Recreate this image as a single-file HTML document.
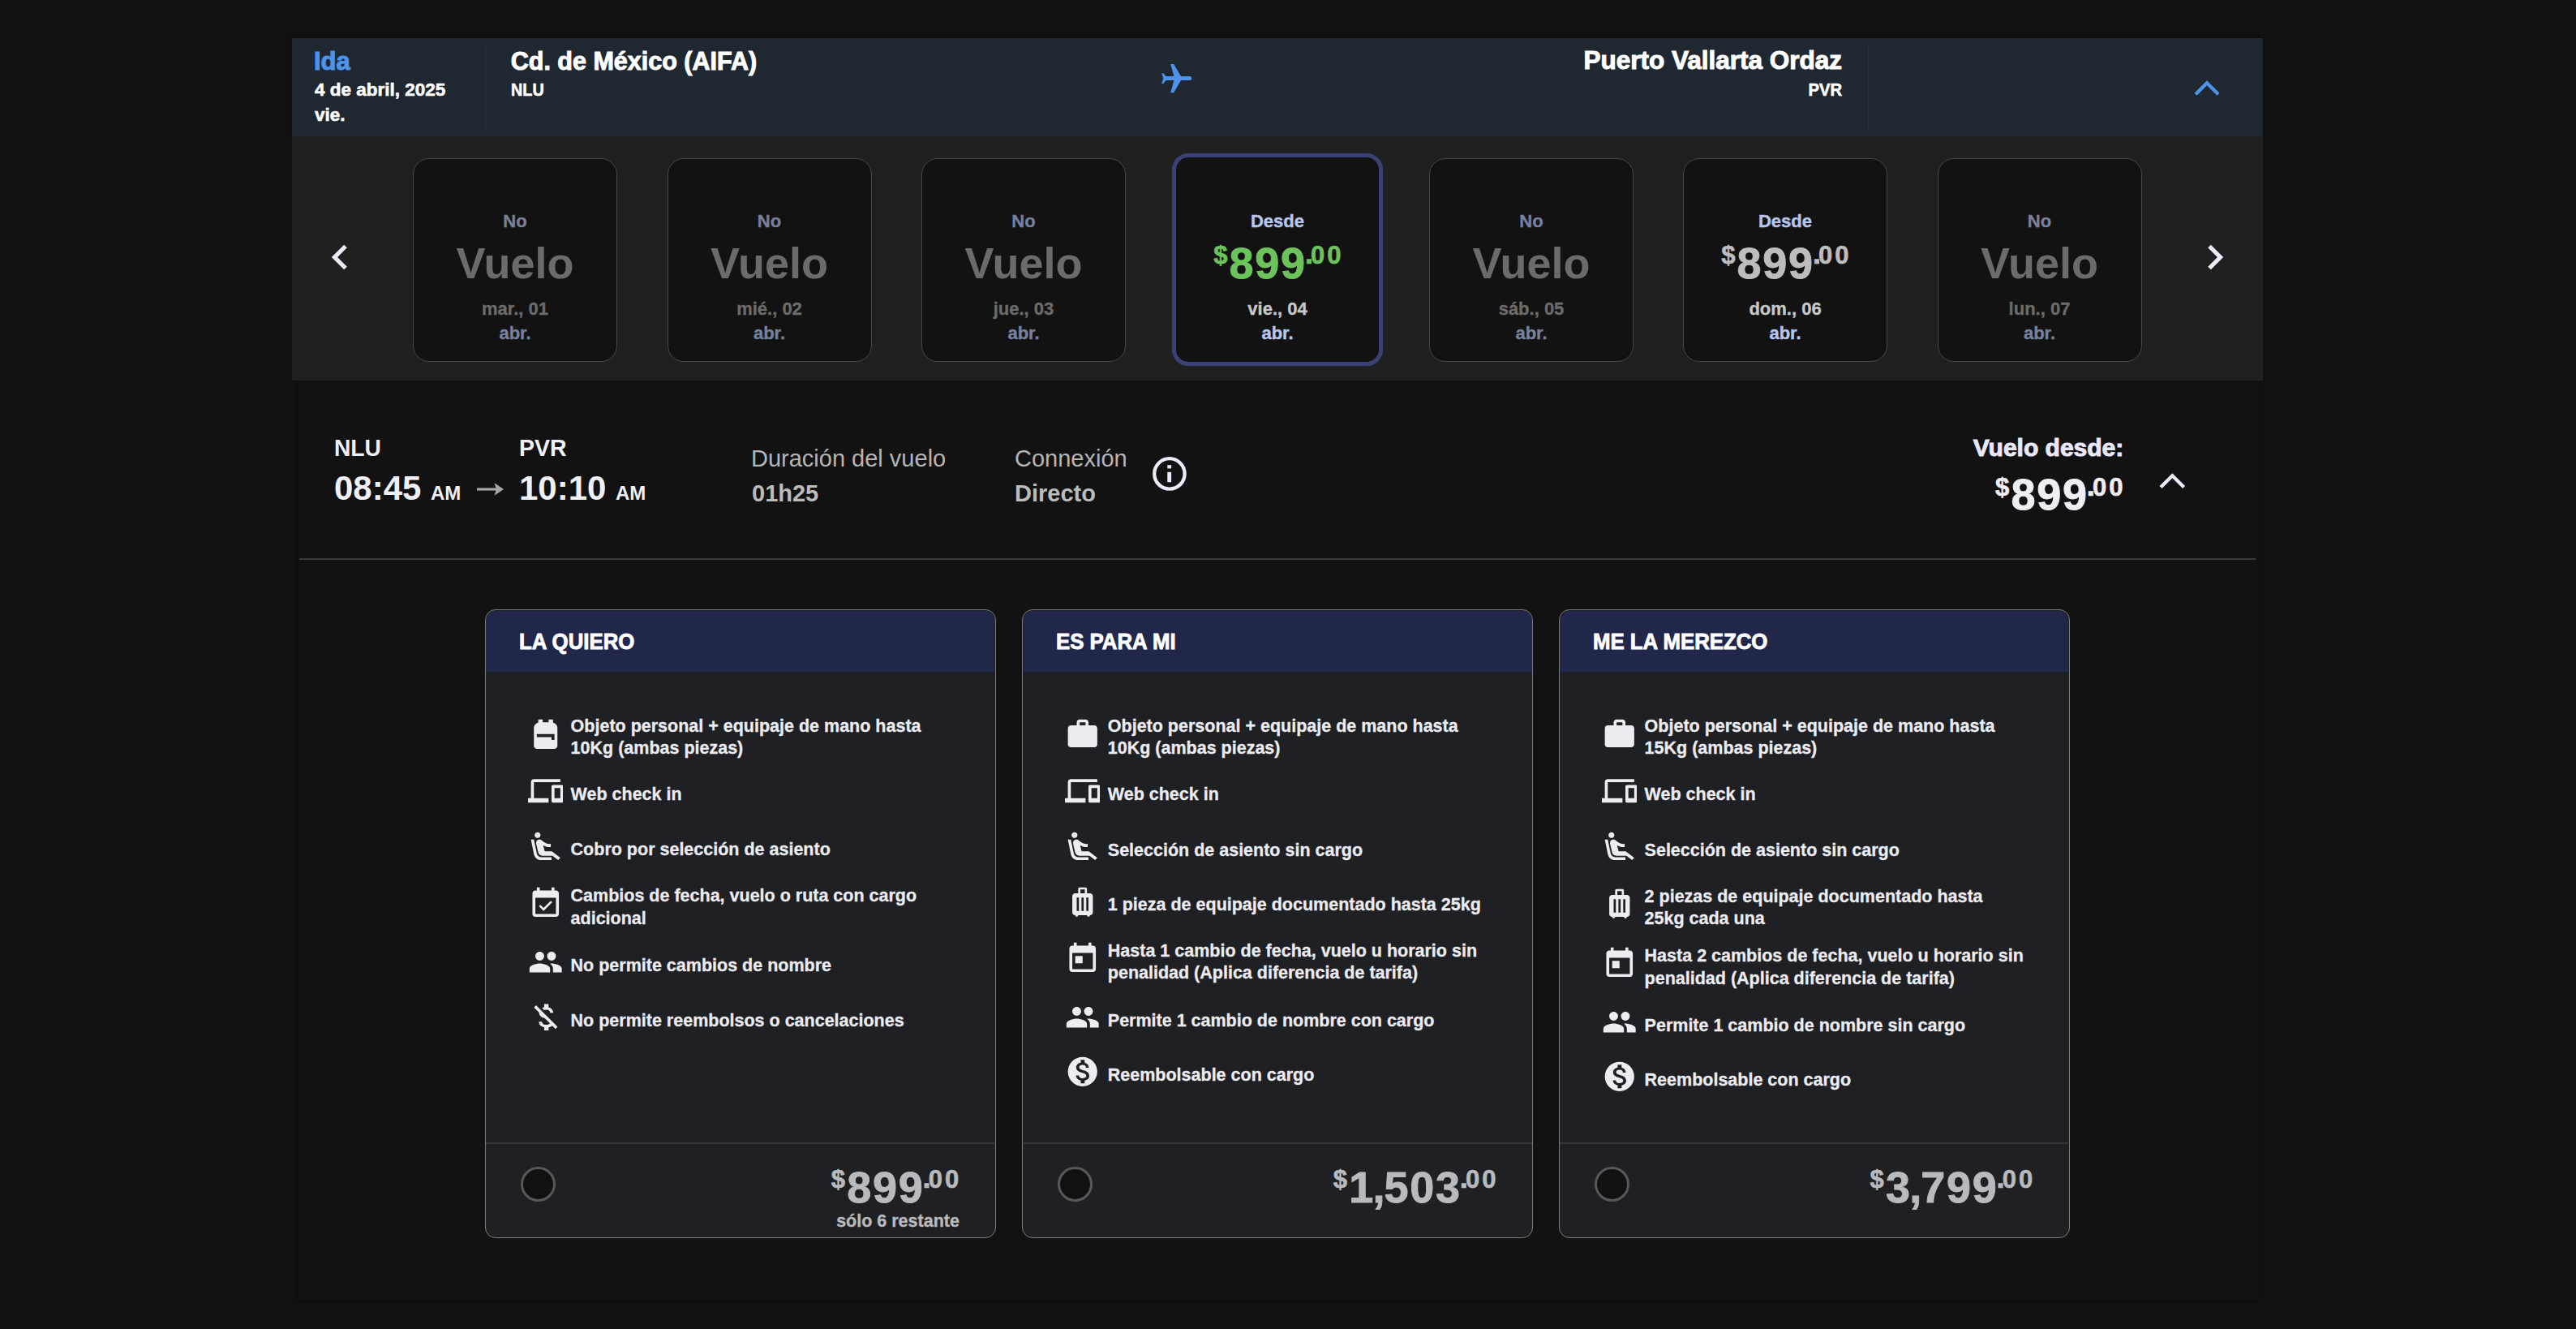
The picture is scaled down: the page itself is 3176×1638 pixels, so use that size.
<!DOCTYPE html><html><head><meta charset="utf-8"><style>
html,body{margin:0;padding:0;background:#111111;width:3176px;height:1638px;overflow:hidden;font-family:"Liberation Sans",sans-serif;}
.t{position:absolute;line-height:1;white-space:nowrap;}
.b{position:absolute;box-sizing:border-box;}
</style></head><body>
<div class="b" style="left:368.00px;top:41.00px;width:2415.00px;height:1560.50px;background:#121212;border-radius:4px;box-shadow:0 3px 4px rgba(0,0,0,0.3);"></div>
<div class="b" style="left:360.00px;top:47.00px;width:2430.00px;height:121.00px;background:#1f2830;box-shadow:0 -3px 5px rgba(0,0,0,0.25);"></div>
<div class="t" style="left:386.99px;top:59.76px;font-size:31px;color:#4d93ea;font-weight:700;-webkit-text-stroke-width:1px;">Ida</div>
<div class="t" style="left:388.00px;top:99.75px;font-size:22.5px;color:#ffffff;font-weight:700;-webkit-text-stroke-width:0.6px;">4 de abril, 2025</div>
<div class="t" style="left:388.00px;top:130.95px;font-size:22.5px;color:#ffffff;font-weight:700;-webkit-text-stroke-width:0.6px;">vie.</div>
<div class="b" style="left:597.50px;top:56.00px;width:1.50px;height:103.00px;background:#2b343d;"></div>
<div class="t" style="left:629.78px;top:60.18px;font-size:30.5px;color:#ffffff;font-weight:700;-webkit-text-stroke-width:1px;">Cd. de México (AIFA)</div>
<div class="t" style="left:629.57px;top:100.18px;font-size:22px;color:#ffffff;font-weight:700;transform:scaleX(0.9);transform-origin:left;-webkit-text-stroke-width:0.6px;">NLU</div>
<svg class="b" style="left:1420px;top:70px;width:60px;height:55px" viewBox="1420 70 60 55"><path fill="#4d93ea" d="M1456 94.1 L1466.4 94.1 Q1469.3 94.1 1469.3 96.6 Q1469.3 99.1 1466.4 99.1 L1456 99.1 L1447.2 114.2 L1443.2 114.2 L1447.4 99.1 L1437.6 99.1 L1434.2 103 L1432.2 103 L1434.3 96.6 L1432.2 90.2 L1434.2 90.2 L1437.6 94.1 L1447.4 94.1 L1443.2 79 L1447.2 79 Z"/></svg>
<div class="t" style="right:905.00px;text-align:right;top:59.34px;font-size:31.5px;color:#ffffff;font-weight:700;-webkit-text-stroke-width:1px;">Puerto Vallarta Ordaz</div>
<div class="t" style="right:905.00px;text-align:right;top:100.18px;font-size:22px;color:#ffffff;font-weight:700;transform:scaleX(0.92);transform-origin:right;-webkit-text-stroke-width:0.6px;">PVR</div>
<div class="b" style="left:2302.50px;top:56.00px;width:1.50px;height:103.00px;background:#2b343d;"></div>
<svg class="b" style="left:2700px;top:92px;width:42px;height:30px" viewBox="0 0 42 30"><path d="M7 24.3 L21 10.3 L35 24.3" fill="none" stroke="#4d93ea" stroke-width="4.4"/></svg>
<div class="b" style="left:360.00px;top:168.00px;width:2430.00px;height:300.60px;background:#202020;"></div>
<svg class="b" style="left:400px;top:296px;width:36px;height:42px" viewBox="0 0 36 42"><path d="M26 7.5 L12.5 21 L26 34.5" fill="none" stroke="#ececf8" stroke-width="5.2"/></svg>
<svg class="b" style="left:2714px;top:296px;width:36px;height:42px" viewBox="0 0 36 42"><path d="M10 7.5 L23.5 21 L10 34.5" fill="none" stroke="#ececf8" stroke-width="5.2"/></svg>
<div class="b" style="left:509.00px;top:195.00px;width:252.00px;height:251.00px;background:#121212;border:1.5px solid #474747;border-radius:20px;"></div>
<div class="t" style="left:-165.00px;width:1600px;text-align:center;top:262.38px;font-size:22px;color:#77819d;font-weight:700;-webkit-text-stroke-width:0.35px;">No</div>
<div class="t" style="left:-165.00px;width:1600px;text-align:center;top:297.29px;font-size:54px;color:#6b6b6b;font-weight:700;">Vuelo</div>
<div class="t" style="left:-165.00px;width:1600px;text-align:center;top:369.88px;font-size:22px;color:#6b6b6b;font-weight:700;-webkit-text-stroke-width:0.35px;">mar., 01</div>
<div class="t" style="left:-165.00px;width:1600px;text-align:center;top:400.38px;font-size:22px;color:#77819d;font-weight:700;-webkit-text-stroke-width:0.35px;">abr.</div>
<div class="b" style="left:822.50px;top:195.00px;width:252.00px;height:251.00px;background:#121212;border:1.5px solid #474747;border-radius:20px;"></div>
<div class="t" style="left:148.50px;width:1600px;text-align:center;top:262.38px;font-size:22px;color:#77819d;font-weight:700;-webkit-text-stroke-width:0.35px;">No</div>
<div class="t" style="left:148.50px;width:1600px;text-align:center;top:297.29px;font-size:54px;color:#6b6b6b;font-weight:700;">Vuelo</div>
<div class="t" style="left:148.50px;width:1600px;text-align:center;top:369.88px;font-size:22px;color:#6b6b6b;font-weight:700;-webkit-text-stroke-width:0.35px;">mié., 02</div>
<div class="t" style="left:148.50px;width:1600px;text-align:center;top:400.38px;font-size:22px;color:#77819d;font-weight:700;-webkit-text-stroke-width:0.35px;">abr.</div>
<div class="b" style="left:1136.00px;top:195.00px;width:252.00px;height:251.00px;background:#121212;border:1.5px solid #474747;border-radius:20px;"></div>
<div class="t" style="left:462.00px;width:1600px;text-align:center;top:262.38px;font-size:22px;color:#77819d;font-weight:700;-webkit-text-stroke-width:0.35px;">No</div>
<div class="t" style="left:462.00px;width:1600px;text-align:center;top:297.29px;font-size:54px;color:#6b6b6b;font-weight:700;">Vuelo</div>
<div class="t" style="left:462.00px;width:1600px;text-align:center;top:369.88px;font-size:22px;color:#6b6b6b;font-weight:700;-webkit-text-stroke-width:0.35px;">jue., 03</div>
<div class="t" style="left:462.00px;width:1600px;text-align:center;top:400.38px;font-size:22px;color:#77819d;font-weight:700;-webkit-text-stroke-width:0.35px;">abr.</div>
<div class="b" style="left:1444.60px;top:189.40px;width:260.10px;height:262.00px;background:#121212;border:5.5px solid #3b4174;border-radius:20px;"></div>
<div class="t" style="left:775.00px;width:1600px;text-align:center;top:262.38px;font-size:22px;color:#b6c6ec;font-weight:700;-webkit-text-stroke-width:0.4px;">Desde</div>
<div class="t" style="left:1496.13px;top:297.09px;font-size:54px;color:#6cc35b;font-weight:700;-webkit-text-stroke-width:0.9px;"><span style="font-size:31px;vertical-align:18.30px;margin-right:2.20px;-webkit-text-stroke-width:0.6px;">$</span><span style="letter-spacing:1.7px;">899</span><span style="font-size:37.82px;line-height:0;vertical-align:18.30px;margin-left:-2.15px;margin-right:-3.10px;-webkit-text-stroke-width:0.6px;">.</span><span style="font-size:31px;vertical-align:18.30px;letter-spacing:3.0px;-webkit-text-stroke-width:0.6px;">00</span></div>
<div class="t" style="left:775.00px;width:1600px;text-align:center;top:369.68px;font-size:22px;color:#c8c8c8;font-weight:700;-webkit-text-stroke-width:0.35px;">vie., 04</div>
<div class="t" style="left:775.00px;width:1600px;text-align:center;top:400.18px;font-size:22px;color:#b6c6ec;font-weight:700;-webkit-text-stroke-width:0.4px;">abr.</div>
<div class="b" style="left:1762.00px;top:195.00px;width:252.00px;height:251.00px;background:#121212;border:1.5px solid #474747;border-radius:20px;"></div>
<div class="t" style="left:1088.00px;width:1600px;text-align:center;top:262.38px;font-size:22px;color:#77819d;font-weight:700;-webkit-text-stroke-width:0.35px;">No</div>
<div class="t" style="left:1088.00px;width:1600px;text-align:center;top:297.29px;font-size:54px;color:#6b6b6b;font-weight:700;">Vuelo</div>
<div class="t" style="left:1088.00px;width:1600px;text-align:center;top:369.88px;font-size:22px;color:#6b6b6b;font-weight:700;-webkit-text-stroke-width:0.35px;">sáb., 05</div>
<div class="t" style="left:1088.00px;width:1600px;text-align:center;top:400.38px;font-size:22px;color:#77819d;font-weight:700;-webkit-text-stroke-width:0.35px;">abr.</div>
<div class="b" style="left:2075.00px;top:195.00px;width:252.00px;height:251.00px;background:#121212;border:1.5px solid #474747;border-radius:20px;"></div>
<div class="t" style="left:1401.00px;width:1600px;text-align:center;top:262.38px;font-size:22px;color:#b6c6ec;font-weight:700;-webkit-text-stroke-width:0.4px;">Desde</div>
<div class="t" style="left:2122.13px;top:297.09px;font-size:54px;color:#bdbdbd;font-weight:700;-webkit-text-stroke-width:0.9px;"><span style="font-size:31px;vertical-align:18.30px;margin-right:2.20px;-webkit-text-stroke-width:0.6px;">$</span><span style="letter-spacing:1.7px;">899</span><span style="font-size:37.82px;line-height:0;vertical-align:18.30px;margin-left:-2.15px;margin-right:-3.10px;-webkit-text-stroke-width:0.6px;">.</span><span style="font-size:31px;vertical-align:18.30px;letter-spacing:3.0px;-webkit-text-stroke-width:0.6px;">00</span></div>
<div class="t" style="left:1401.00px;width:1600px;text-align:center;top:369.68px;font-size:22px;color:#c8c8c8;font-weight:700;-webkit-text-stroke-width:0.35px;">dom., 06</div>
<div class="t" style="left:1401.00px;width:1600px;text-align:center;top:400.18px;font-size:22px;color:#b6c6ec;font-weight:700;-webkit-text-stroke-width:0.4px;">abr.</div>
<div class="b" style="left:2388.50px;top:195.00px;width:252.00px;height:251.00px;background:#121212;border:1.5px solid #474747;border-radius:20px;"></div>
<div class="t" style="left:1714.50px;width:1600px;text-align:center;top:262.38px;font-size:22px;color:#77819d;font-weight:700;-webkit-text-stroke-width:0.35px;">No</div>
<div class="t" style="left:1714.50px;width:1600px;text-align:center;top:297.29px;font-size:54px;color:#6b6b6b;font-weight:700;">Vuelo</div>
<div class="t" style="left:1714.50px;width:1600px;text-align:center;top:369.88px;font-size:22px;color:#6b6b6b;font-weight:700;-webkit-text-stroke-width:0.35px;">lun., 07</div>
<div class="t" style="left:1714.50px;width:1600px;text-align:center;top:400.38px;font-size:22px;color:#77819d;font-weight:700;-webkit-text-stroke-width:0.35px;">abr.</div>
<div class="t" style="left:412.00px;top:536.81px;font-size:30px;color:#f0f0f8;font-weight:700;transform:scaleX(0.94);transform-origin:left;">NLU</div>
<div class="t" style="left:412.00px;top:580.95px;font-size:42px;color:#f0f0f8;font-weight:700;">08:45</div>
<div class="t" style="left:531.00px;top:595.88px;font-size:24px;color:#f0f0f8;font-weight:700;">AM</div>
<svg class="b" style="left:586px;top:592px;width:38px;height:22px" viewBox="0 0 38 22"><path d="M2 11 H31" fill="none" stroke="#a8a8a8" stroke-width="3.2"/><path d="M23.5 3.2 L35 11 L23.5 18.8 L26 11 Z" fill="#a8a8a8"/></svg>
<div class="t" style="left:640.00px;top:536.81px;font-size:30px;color:#f0f0f8;font-weight:700;transform:scaleX(0.95);transform-origin:left;">PVR</div>
<div class="t" style="left:640.00px;top:580.95px;font-size:42px;color:#f0f0f8;font-weight:700;">10:10</div>
<div class="t" style="left:759.00px;top:595.88px;font-size:24px;color:#f0f0f8;font-weight:700;">AM</div>
<div class="t" style="left:926.00px;top:551.25px;font-size:29px;color:#b5b5b5;font-weight:400;">Duración del vuelo</div>
<div class="t" style="left:927.00px;top:594.05px;font-size:29px;color:#bcbcbc;font-weight:700;">01h25</div>
<div class="t" style="left:1251.00px;top:551.25px;font-size:29px;color:#b5b5b5;font-weight:400;">Connexión</div>
<div class="t" style="left:1251.00px;top:594.05px;font-size:29px;color:#bcbcbc;font-weight:700;">Directo</div>
<svg class="b" style="left:1419px;top:561px;width:45px;height:45px" viewBox="0 0 45 45"><circle cx="22.9" cy="22.9" r="18.7" fill="none" stroke="#ececf8" stroke-width="4.3"/><rect x="20.3" y="20.8" width="4.8" height="12.5" fill="#ececf8"/><rect x="20.3" y="12.2" width="4.8" height="4.2" fill="#ececf8"/></svg>
<div class="t" style="right:557.70px;text-align:right;top:536.61px;font-size:30px;color:#e8e8f8;font-weight:700;-webkit-text-stroke-width:1px;">Vuelo desde:</div>
<div class="t" style="left:2460.03px;top:581.79px;font-size:54px;color:#eeeef4;font-weight:700;-webkit-text-stroke-width:0.9px;"><span style="font-size:31px;vertical-align:16.80px;margin-right:2.20px;-webkit-text-stroke-width:0.6px;">$</span><span style="letter-spacing:1.7px;">899</span><span style="font-size:37.82px;line-height:0;vertical-align:16.80px;margin-left:-2.15px;margin-right:-3.10px;-webkit-text-stroke-width:0.6px;">.</span><span style="font-size:31px;vertical-align:16.80px;letter-spacing:3.0px;-webkit-text-stroke-width:0.6px;">00</span></div>
<svg class="b" style="left:2656px;top:576px;width:44px;height:32px" viewBox="0 0 44 32"><path d="M8 24.5 L22.3 10.2 L36.6 24.5" fill="none" stroke="#ececf8" stroke-width="4.3"/></svg>
<div class="b" style="left:369.00px;top:688.00px;width:2412.00px;height:2.00px;background:#3a3a3a;"></div>
<div class="b" style="left:598.20px;top:751.30px;width:629.40px;height:774.50px;background:#1f2023;border:1.2px solid #7c7c7e;border-radius:13px;overflow:hidden;"></div>
<div class="b" style="left:599.40px;top:752.50px;width:627.00px;height:75.80px;background:#21274a;border-radius:12px 12px 0 0;"></div>
<div class="t" style="left:640.05px;top:775.57px;font-size:28.5px;color:#ffffff;font-weight:700;transform:scaleX(0.905);transform-origin:left;-webkit-text-stroke-width:0.9px;">LA QUIERO</div>
<div class="t" style="left:703.60px;top:884.70px;font-size:21.5px;color:#ececf2;font-weight:700;-webkit-text-stroke-width:0.3px;">Objeto personal + equipaje de mano hasta</div>
<div class="t" style="left:703.60px;top:912.20px;font-size:21.5px;color:#ececf2;font-weight:700;-webkit-text-stroke-width:0.3px;">10Kg (ambas piezas)</div>
<svg class="b" style="left:650.55px;top:882.55px;width:43.50px;height:43.50px;" viewBox="0 0 24 24"><path fill="#ececf2" d="M20 8v12c0 1.1-.9 2-2 2H6c-1.1 0-2-.9-2-2V8c0-1.86 1.28-3.41 3-3.86V2h3v2h4V2h3v2.14c1.72.45 3 2 3 3.86zM6 12v2h10v2h2v-4H6z"/></svg>
<div class="t" style="left:703.60px;top:969.30px;font-size:21.5px;color:#ececf2;font-weight:700;-webkit-text-stroke-width:0.3px;">Web check in</div>
<svg class="b" style="left:650.55px;top:953.40px;width:43.50px;height:43.50px;" viewBox="0 0 24 24"><path fill="#ececf2" d="M4 6h18V4H4c-1.1 0-2 .9-2 2v11H0v3h14v-3H4V6zm19 2h-6c-.55 0-1 .45-1 1v10c0 .55.45 1 1 1h6c.55 0 1-.45 1-1V9c0-.55-.45-1-1-1zm-1 9h-4v-7h4v7z"/></svg>
<div class="t" style="left:703.60px;top:1037.40px;font-size:21.5px;color:#ececf2;font-weight:700;-webkit-text-stroke-width:0.3px;">Cobro por selección de asiento</div>
<svg class="b" style="left:650.55px;top:1021.50px;width:43.50px;height:43.50px;" viewBox="0 0 24 24"><path fill="#ececf2" d="M5.35 5.64c-.9-.64-1.12-1.88-.49-2.79.63-.9 1.880-1.12 2.79-.49.9.64 1.12 1.88.49 2.79-.64.9-1.88 1.12-2.790.49zM16 19H8.930c-1.48 0-2.74-1.08-2.96-2.54L4 7H2l1.99 9.76C4.37 19.2 6.47 21 8.94 21H16v-2zm.23-4h-4.88l-1.03-4.1c1.58.89 3.28 1.54 5.15 1.22V9.99c-1.63.31-3.440-.27-4.69-1.25L9.14 7.47c-.23-.18-.49-.3-.76-.38-.32-.09-.66-.12-.99-.06h-.02c-1.23.22-2.05 1.39-1.84 2.61l1.35 5.92C7.16 16.98 8.39 18 9.83 18h6.85l3.82 3 1.5-1.5-5.77-4.5z"/></svg>
<div class="t" style="left:703.60px;top:1094.30px;font-size:21.5px;color:#ececf2;font-weight:700;-webkit-text-stroke-width:0.3px;">Cambios de fecha, vuelo o ruta con cargo</div>
<div class="t" style="left:703.60px;top:1121.80px;font-size:21.5px;color:#ececf2;font-weight:700;-webkit-text-stroke-width:0.3px;">adicional</div>
<svg class="b" style="left:650.55px;top:1092.15px;width:43.50px;height:43.50px;" viewBox="0 0 24 24"><path fill="#ececf2" d="M16.53 11.06L15.47 10l-4.88 4.88-2.12-2.12-1.06 1.06L10.59 17l5.94-5.94zM19 3h-1V1h-2v2H8V1H6v2H5c-1.11 0-1.99.9-1.99 2L3 19c0 1.1.89 2 2 2h14c1.1 0 2-.9 2-2V5c0-1.1-.9-2-2-2zm0 16H5V8h14v11z"/></svg>
<div class="t" style="left:703.60px;top:1180.10px;font-size:21.5px;color:#ececf2;font-weight:700;-webkit-text-stroke-width:0.3px;">No permite cambios de nombre</div>
<svg class="b" style="left:650.55px;top:1164.20px;width:43.50px;height:43.50px;" viewBox="0 0 24 24"><path fill="#ececf2" d="M16 11c1.66 0 2.99-1.34 2.99-3S17.66 5 16 5c-1.66 0-3 1.34-3 3s1.34 3 3 3zm-8 0c1.66 0 2.99-1.34 2.99-3S9.66 5 8 5C6.34 5 5 6.34 5 8s1.34 3 3 3zm0 2c-2.33 0-7 1.17-7 3.5V19h14v-2.5c0-2.33-4.67-3.5-7-3.5zm8 0c-.29 0-.62.02-.97.05 1.16.84 1.97 1.97 1.97 3.45V19h6v-2.5c0-2.33-4.67-3.5-7-3.5z"/></svg>
<div class="t" style="left:703.60px;top:1247.70px;font-size:21.5px;color:#ececf2;font-weight:700;-webkit-text-stroke-width:0.3px;">No permite reembolsos o cancelaciones</div>
<svg class="b" style="left:650.55px;top:1231.80px;width:43.50px;height:43.50px;" viewBox="0 0 24 24"><path fill="#ececf2" d="M12.5 6.9c1.78 0 2.44.85 2.5 2.1h2.21c-.07-1.72-1.12-3.3-3.21-3.81V3h-3v2.16c-.53.12-1.030.3-1.48.54l1.47 1.47c.41-.17.91-.27 1.51-.27zM5.47 3.92L4.06 5.33 7.5 8.77c0 2.08 1.56 3.21 3.91 3.910l3.51 3.51c-.34.48-1.05.91-2.42.91-2.06 0-2.87-.92-2.98-2.1h-2.2c.12 2.19 1.76 3.42 3.68 3.83V21h3v-2.15c.96-.18 1.82-.55 2.45-1.12l2.22 2.22 1.41-1.41L5.47 3.92z"/></svg>
<div class="b" style="left:599.40px;top:1408.40px;width:627.00px;height:2.00px;background:#35363a;"></div>
<div class="b" style="left:642.20px;top:1437.5px;width:43px;height:43px;border-radius:50%;border:3px solid #58585c;background:#111111;"></div>
<div class="t" style="right:1990.74px;top:1435.89px;font-size:54px;color:#b9babd;font-weight:700;-webkit-text-stroke-width:0.9px;"><span style="font-size:31px;vertical-align:18.00px;margin-right:2.20px;-webkit-text-stroke-width:0.6px;">$</span><span style="letter-spacing:1.7px;">899</span><span style="font-size:37.82px;line-height:0;vertical-align:18.00px;margin-left:-2.15px;margin-right:-3.10px;-webkit-text-stroke-width:0.6px;">.</span><span style="font-size:31px;vertical-align:18.00px;letter-spacing:3.0px;-webkit-text-stroke-width:0.6px;">00</span></div>
<div class="t" style="right:1993.10px;text-align:right;top:1494.60px;font-size:21.5px;color:#b9babd;font-weight:700;-webkit-text-stroke-width:0.35px;">sólo 6 restante</div>
<div class="b" style="left:1260.40px;top:751.30px;width:629.40px;height:774.50px;background:#1f2023;border:1.2px solid #7c7c7e;border-radius:13px;overflow:hidden;"></div>
<div class="b" style="left:1261.60px;top:752.50px;width:627.00px;height:75.80px;background:#21274a;border-radius:12px 12px 0 0;"></div>
<div class="t" style="left:1302.25px;top:775.57px;font-size:28.5px;color:#ffffff;font-weight:700;transform:scaleX(0.905);transform-origin:left;-webkit-text-stroke-width:0.9px;">ES PARA MI</div>
<div class="t" style="left:1365.80px;top:884.70px;font-size:21.5px;color:#ececf2;font-weight:700;-webkit-text-stroke-width:0.3px;">Objeto personal + equipaje de mano hasta</div>
<div class="t" style="left:1365.80px;top:912.20px;font-size:21.5px;color:#ececf2;font-weight:700;-webkit-text-stroke-width:0.3px;">10Kg (ambas piezas)</div>
<svg class="b" style="left:1312.75px;top:882.55px;width:43.50px;height:43.50px;" viewBox="0 0 24 24"><path fill="#ececf2" d="M20 6h-4V4c0-1.11-.89-2-2-2h-4c-1.11 0-2 .89-2 2v2H4c-1.11 0-1.99.89-1.99 2L2 19c0 1.11.89 2 2 2h16c1.11 0 2-.89 2-2V8c0-1.11-.89-2-2-2zm-6 0h-4V4h4v2z"/></svg>
<div class="t" style="left:1365.80px;top:969.30px;font-size:21.5px;color:#ececf2;font-weight:700;-webkit-text-stroke-width:0.3px;">Web check in</div>
<svg class="b" style="left:1312.75px;top:953.40px;width:43.50px;height:43.50px;" viewBox="0 0 24 24"><path fill="#ececf2" d="M4 6h18V4H4c-1.1 0-2 .9-2 2v11H0v3h14v-3H4V6zm19 2h-6c-.55 0-1 .45-1 1v10c0 .55.45 1 1 1h6c.55 0 1-.45 1-1V9c0-.55-.45-1-1-1zm-1 9h-4v-7h4v7z"/></svg>
<div class="t" style="left:1365.80px;top:1037.50px;font-size:21.5px;color:#ececf2;font-weight:700;-webkit-text-stroke-width:0.3px;">Selección de asiento sin cargo</div>
<svg class="b" style="left:1312.75px;top:1021.60px;width:43.50px;height:43.50px;" viewBox="0 0 24 24"><path fill="#ececf2" d="M5.35 5.64c-.9-.64-1.12-1.88-.49-2.79.63-.9 1.880-1.12 2.79-.49.9.64 1.12 1.88.49 2.79-.64.9-1.88 1.12-2.790.49zM16 19H8.930c-1.48 0-2.74-1.08-2.96-2.54L4 7H2l1.99 9.76C4.37 19.2 6.47 21 8.94 21H16v-2zm.23-4h-4.88l-1.03-4.1c1.58.89 3.28 1.54 5.15 1.22V9.99c-1.63.31-3.440-.27-4.69-1.25L9.14 7.47c-.23-.18-.49-.3-.76-.38-.32-.09-.66-.12-.99-.06h-.02c-1.23.22-2.05 1.39-1.84 2.61l1.35 5.92C7.16 16.98 8.39 18 9.83 18h6.85l3.82 3 1.5-1.5-5.77-4.5z"/></svg>
<div class="t" style="left:1365.80px;top:1105.40px;font-size:21.5px;color:#ececf2;font-weight:700;-webkit-text-stroke-width:0.3px;">1 pieza de equipaje documentado hasta 25kg</div>
<svg class="b" style="left:1312.75px;top:1089.50px;width:43.50px;height:43.50px;" viewBox="0 0 24 24"><path fill="#ececf2" d="M17 6h-2V3c0-.55-.45-1-1-1h-4c-.55 0-1 .45-1 1v3H7c-1.1 0-2 .9-2 2v11c0 1.1.9 2 2 2 0 .55.45 1 1 1s1-.45 1-1h6c0 .55.45 1 1 1s1-.45 1-1c1.1 0 2-.9 2-2V8c0-1.1-.9-2-2-2zM9.5 18H8V9h1.5v9zm3.25 0h-1.5V9h1.5v9zm.75-12h-3V3.5h3V6zM16 18h-1.5V9H16v9z"/></svg>
<div class="t" style="left:1365.80px;top:1161.80px;font-size:21.5px;color:#ececf2;font-weight:700;-webkit-text-stroke-width:0.3px;">Hasta 1 cambio de fecha, vuelo u horario sin</div>
<div class="t" style="left:1365.80px;top:1189.30px;font-size:21.5px;color:#ececf2;font-weight:700;-webkit-text-stroke-width:0.3px;">penalidad (Aplica diferencia de tarifa)</div>
<svg class="b" style="left:1312.75px;top:1159.65px;width:43.50px;height:43.50px;" viewBox="0 0 24 24"><path fill="#ececf2" d="M19 3h-1V1h-2v2H8V1H6v2H5c-1.11 0-1.99.9-1.99 2L3 19c0 1.1.89 2 2 2h14c1.1 0 2-.9 2-2V5c0-1.1-.9-2-2-2zm0 16H5V8h14v11zM7 10h5v5H7z"/></svg>
<div class="t" style="left:1365.80px;top:1247.70px;font-size:21.5px;color:#ececf2;font-weight:700;-webkit-text-stroke-width:0.3px;">Permite 1 cambio de nombre con cargo</div>
<svg class="b" style="left:1312.75px;top:1231.80px;width:43.50px;height:43.50px;" viewBox="0 0 24 24"><path fill="#ececf2" d="M16 11c1.66 0 2.99-1.34 2.99-3S17.66 5 16 5c-1.66 0-3 1.34-3 3s1.34 3 3 3zm-8 0c1.66 0 2.99-1.34 2.99-3S9.66 5 8 5C6.34 5 5 6.34 5 8s1.34 3 3 3zm0 2c-2.33 0-7 1.17-7 3.5V19h14v-2.5c0-2.33-4.67-3.5-7-3.5zm8 0c-.29 0-.62.02-.97.05 1.16.84 1.97 1.97 1.97 3.45V19h6v-2.5c0-2.33-4.67-3.5-7-3.5z"/></svg>
<div class="t" style="left:1365.80px;top:1315.30px;font-size:21.5px;color:#ececf2;font-weight:700;-webkit-text-stroke-width:0.3px;">Reembolsable con cargo</div>
<svg class="b" style="left:1312.75px;top:1299.40px;width:43.50px;height:43.50px;" viewBox="0 0 24 24"><path fill="#ececf2" d="M12 2C6.48 2 2 6.48 2 12s4.48 10 10 10 10-4.48 10-10S17.52 2 12 2zm1.41 16.09V20h-2.67v-1.93c-1.71-.36-3.16-1.46-3.27-3.4h1.96c.1 1.05.82 1.87 2.65 1.87 1.96 0 2.4-.98 2.4-1.59 0-.83-.44-1.61-2.67-2.14-2.48-.6-4.18-1.62-4.18-3.67 0-1.72 1.39-2.84 3.110-3.21V4h2.67v1.95c1.86.45 2.79 1.86 2.85 3.39H14.3c-.05-1.11-.64-1.87-2.22-1.87-1.5 0-2.4.68-2.4 1.64 0 .84.65 1.39 2.67 1.91s4.18 1.39 4.18 3.91c-.01 1.83-1.38 2.83-3.12 3.16z"/></svg>
<div class="b" style="left:1261.60px;top:1408.40px;width:627.00px;height:2.00px;background:#35363a;"></div>
<div class="b" style="left:1304.40px;top:1437.5px;width:43px;height:43px;border-radius:50%;border:3px solid #58585c;background:#111111;"></div>
<div class="t" style="right:1328.54px;top:1435.89px;font-size:54px;color:#b9babd;font-weight:700;-webkit-text-stroke-width:0.9px;"><span style="font-size:31px;vertical-align:18.00px;margin-right:2.20px;-webkit-text-stroke-width:0.6px;">$</span><span style="letter-spacing:1.7px;">1<span style="margin:0 -2.6px;">,</span>503</span><span style="font-size:37.82px;line-height:0;vertical-align:18.00px;margin-left:-2.15px;margin-right:-3.10px;-webkit-text-stroke-width:0.6px;">.</span><span style="font-size:31px;vertical-align:18.00px;letter-spacing:3.0px;-webkit-text-stroke-width:0.6px;">00</span></div>
<div class="b" style="left:1922.20px;top:751.30px;width:629.40px;height:774.50px;background:#1f2023;border:1.2px solid #7c7c7e;border-radius:13px;overflow:hidden;"></div>
<div class="b" style="left:1923.40px;top:752.50px;width:627.00px;height:75.80px;background:#21274a;border-radius:12px 12px 0 0;"></div>
<div class="t" style="left:1964.05px;top:775.57px;font-size:28.5px;color:#ffffff;font-weight:700;transform:scaleX(0.905);transform-origin:left;-webkit-text-stroke-width:0.9px;">ME LA MEREZCO</div>
<div class="t" style="left:2027.60px;top:884.70px;font-size:21.5px;color:#ececf2;font-weight:700;-webkit-text-stroke-width:0.3px;">Objeto personal + equipaje de mano hasta</div>
<div class="t" style="left:2027.60px;top:912.20px;font-size:21.5px;color:#ececf2;font-weight:700;-webkit-text-stroke-width:0.3px;">15Kg (ambas piezas)</div>
<svg class="b" style="left:1974.55px;top:882.55px;width:43.50px;height:43.50px;" viewBox="0 0 24 24"><path fill="#ececf2" d="M20 6h-4V4c0-1.11-.89-2-2-2h-4c-1.11 0-2 .89-2 2v2H4c-1.11 0-1.99.89-1.99 2L2 19c0 1.11.89 2 2 2h16c1.11 0 2-.89 2-2V8c0-1.11-.89-2-2-2zm-6 0h-4V4h4v2z"/></svg>
<div class="t" style="left:2027.60px;top:969.30px;font-size:21.5px;color:#ececf2;font-weight:700;-webkit-text-stroke-width:0.3px;">Web check in</div>
<svg class="b" style="left:1974.55px;top:953.40px;width:43.50px;height:43.50px;" viewBox="0 0 24 24"><path fill="#ececf2" d="M4 6h18V4H4c-1.1 0-2 .9-2 2v11H0v3h14v-3H4V6zm19 2h-6c-.55 0-1 .45-1 1v10c0 .55.45 1 1 1h6c.55 0 1-.45 1-1V9c0-.55-.45-1-1-1zm-1 9h-4v-7h4v7z"/></svg>
<div class="t" style="left:2027.60px;top:1037.50px;font-size:21.5px;color:#ececf2;font-weight:700;-webkit-text-stroke-width:0.3px;">Selección de asiento sin cargo</div>
<svg class="b" style="left:1974.55px;top:1021.60px;width:43.50px;height:43.50px;" viewBox="0 0 24 24"><path fill="#ececf2" d="M5.35 5.64c-.9-.64-1.12-1.88-.49-2.79.63-.9 1.880-1.12 2.79-.49.9.64 1.12 1.88.49 2.79-.64.9-1.88 1.12-2.790.49zM16 19H8.930c-1.48 0-2.74-1.08-2.96-2.54L4 7H2l1.99 9.76C4.37 19.2 6.47 21 8.94 21H16v-2zm.23-4h-4.88l-1.03-4.1c1.58.89 3.28 1.54 5.15 1.22V9.99c-1.63.31-3.440-.27-4.69-1.25L9.14 7.47c-.23-.18-.49-.3-.76-.38-.32-.09-.66-.12-.99-.06h-.02c-1.23.22-2.05 1.39-1.84 2.61l1.35 5.92C7.16 16.98 8.39 18 9.83 18h6.85l3.82 3 1.5-1.5-5.77-4.5z"/></svg>
<div class="t" style="left:2027.60px;top:1094.60px;font-size:21.5px;color:#ececf2;font-weight:700;-webkit-text-stroke-width:0.3px;">2 piezas de equipaje documentado hasta</div>
<div class="t" style="left:2027.60px;top:1122.10px;font-size:21.5px;color:#ececf2;font-weight:700;-webkit-text-stroke-width:0.3px;">25kg cada una</div>
<svg class="b" style="left:1974.55px;top:1092.45px;width:43.50px;height:43.50px;" viewBox="0 0 24 24"><path fill="#ececf2" d="M17 6h-2V3c0-.55-.45-1-1-1h-4c-.55 0-1 .45-1 1v3H7c-1.1 0-2 .9-2 2v11c0 1.1.9 2 2 2 0 .55.45 1 1 1s1-.45 1-1h6c0 .55.45 1 1 1s1-.45 1-1c1.1 0 2-.9 2-2V8c0-1.1-.9-2-2-2zM9.5 18H8V9h1.5v9zm3.25 0h-1.5V9h1.5v9zm.75-12h-3V3.5h3V6zM16 18h-1.5V9H16v9z"/></svg>
<div class="t" style="left:2027.60px;top:1168.30px;font-size:21.5px;color:#ececf2;font-weight:700;-webkit-text-stroke-width:0.3px;">Hasta 2 cambios de fecha, vuelo u horario sin</div>
<div class="t" style="left:2027.60px;top:1195.80px;font-size:21.5px;color:#ececf2;font-weight:700;-webkit-text-stroke-width:0.3px;">penalidad (Aplica diferencia de tarifa)</div>
<svg class="b" style="left:1974.55px;top:1166.15px;width:43.50px;height:43.50px;" viewBox="0 0 24 24"><path fill="#ececf2" d="M19 3h-1V1h-2v2H8V1H6v2H5c-1.11 0-1.99.9-1.99 2L3 19c0 1.1.89 2 2 2h14c1.1 0 2-.9 2-2V5c0-1.1-.9-2-2-2zm0 16H5V8h14v11zM7 10h5v5H7z"/></svg>
<div class="t" style="left:2027.60px;top:1253.60px;font-size:21.5px;color:#ececf2;font-weight:700;-webkit-text-stroke-width:0.3px;">Permite 1 cambio de nombre sin cargo</div>
<svg class="b" style="left:1974.55px;top:1237.70px;width:43.50px;height:43.50px;" viewBox="0 0 24 24"><path fill="#ececf2" d="M16 11c1.66 0 2.99-1.34 2.99-3S17.66 5 16 5c-1.66 0-3 1.34-3 3s1.34 3 3 3zm-8 0c1.66 0 2.99-1.34 2.99-3S9.66 5 8 5C6.34 5 5 6.34 5 8s1.34 3 3 3zm0 2c-2.33 0-7 1.17-7 3.5V19h14v-2.5c0-2.33-4.67-3.5-7-3.5zm8 0c-.29 0-.62.02-.97.05 1.16.84 1.97 1.97 1.97 3.45V19h6v-2.5c0-2.33-4.67-3.5-7-3.5z"/></svg>
<div class="t" style="left:2027.60px;top:1321.10px;font-size:21.5px;color:#ececf2;font-weight:700;-webkit-text-stroke-width:0.3px;">Reembolsable con cargo</div>
<svg class="b" style="left:1974.55px;top:1305.20px;width:43.50px;height:43.50px;" viewBox="0 0 24 24"><path fill="#ececf2" d="M12 2C6.48 2 2 6.48 2 12s4.48 10 10 10 10-4.48 10-10S17.52 2 12 2zm1.41 16.09V20h-2.67v-1.93c-1.71-.36-3.16-1.46-3.27-3.4h1.96c.1 1.05.82 1.87 2.65 1.87 1.96 0 2.4-.98 2.4-1.59 0-.83-.44-1.61-2.67-2.14-2.48-.6-4.18-1.62-4.18-3.67 0-1.72 1.39-2.84 3.110-3.21V4h2.67v1.95c1.86.45 2.79 1.86 2.85 3.39H14.3c-.05-1.11-.64-1.87-2.22-1.87-1.5 0-2.4.68-2.4 1.64 0 .84.65 1.39 2.67 1.91s4.18 1.39 4.18 3.91c-.01 1.83-1.38 2.83-3.12 3.16z"/></svg>
<div class="b" style="left:1923.40px;top:1408.40px;width:627.00px;height:2.00px;background:#35363a;"></div>
<div class="b" style="left:1966.20px;top:1437.5px;width:43px;height:43px;border-radius:50%;border:3px solid #58585c;background:#111111;"></div>
<div class="t" style="right:666.74px;top:1435.89px;font-size:54px;color:#b9babd;font-weight:700;-webkit-text-stroke-width:0.9px;"><span style="font-size:31px;vertical-align:18.00px;margin-right:2.20px;-webkit-text-stroke-width:0.6px;">$</span><span style="letter-spacing:1.7px;">3<span style="margin:0 -2.6px;">,</span>799</span><span style="font-size:37.82px;line-height:0;vertical-align:18.00px;margin-left:-2.15px;margin-right:-3.10px;-webkit-text-stroke-width:0.6px;">.</span><span style="font-size:31px;vertical-align:18.00px;letter-spacing:3.0px;-webkit-text-stroke-width:0.6px;">00</span></div>
</body></html>
